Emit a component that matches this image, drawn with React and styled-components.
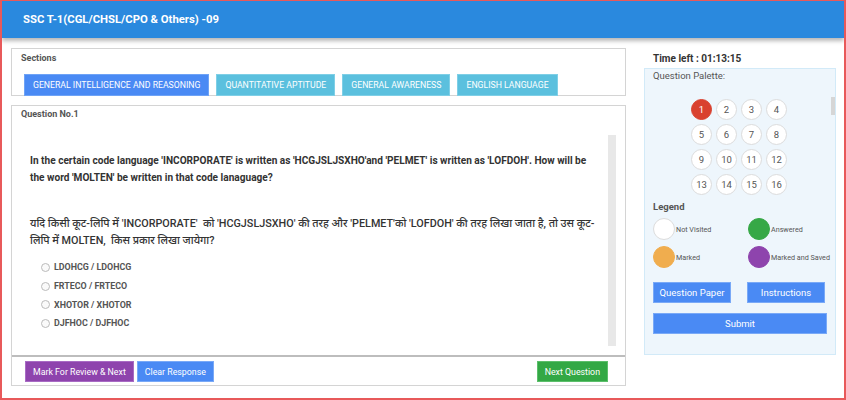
import React from "react";
import styled, { createGlobalStyle } from "styled-components";

const Global = createGlobalStyle`
  html, body { margin: 0; padding: 0; background: #fff; }
  body { font-family: Roboto, "Noto Sans", "Liberation Sans", sans-serif; }
  * { box-sizing: border-box; }
`;

const Frame = styled.div`
  width: 846px;
  height: 400px;
  border: 2px solid #e8595a;
  border-top-width: 1px;
  overflow: hidden;
  display: flex;
  flex-direction: column;
`;

const Header = styled.header`
  height: 37px;
  flex: none;
  background: #2a89de;
  box-shadow: 0 3px 4px rgba(0, 0, 0, 0.28);
  display: flex;
  align-items: center;
  padding-left: 21px;
  color: #fff;
  font-weight: 700;
  font-size: 11.3px;
  position: relative;
  z-index: 1;
`;

const Body = styled.div`
  display: flex;
  padding: 10px 0 0 9px;
  gap: 18px;
`;

const LeftCol = styled.div`
  width: 615px;
  display: flex;
  flex-direction: column;
  gap: 9px;
`;

const Panel = styled.div`
  border: 1px solid #d4d4d4;
  background: #fff;
`;

const SectionsPanel = styled(Panel)`
  height: 48px;
  padding: 3px 0 0 9px;
`;

const Label = styled.div`
  font-size: 9px;
  font-weight: 700;
  color: #555;
  line-height: 12px;
`;

const SectionRow = styled.div`
  display: flex;
  gap: 7px;
  margin-top: 10px;
  padding-left: 3px;
`;

const SectionBtn = styled.div`
  height: 22px;
  padding: 0 8px;
  display: flex;
  align-items: center;
  font-size: 8.7px;
  color: #fff;
  background: ${(p) => (p.$active ? "#4a8af4" : "#5bc0de")};
  border: 1px solid ${(p) => (p.$active ? "#6fa3f6" : "#7fcfe6")};
`;

const QuestionPanel = styled(Panel)`
  height: 281px;
  display: flex;
  flex-direction: column;
`;

const QHead = styled(Label)`
  padding: 2px 0 0 9px;
`;

const QScrollWrap = styled.div`
  display: flex;
  margin-top: 15px;
  height: 211px;
`;

const QContent = styled.div`
  flex: 1;
  padding: 17px 0 0 18px;
  color: #333;
`;

const EnglishQ = styled.p`
  margin: 0;
  font-size: 10.1px;
  font-weight: 700;
  line-height: 17px;
  width: 565px;
`;

const HindiQ = styled.p`
  margin: 29px 0 0;
  font-size: 10.8px;
  font-weight: 500;
  line-height: 17px;
  width: 577px;
`;

const Options = styled.div`
  margin-top: 9px;
  padding-left: 11px;
  display: flex;
  flex-direction: column;
`;

const Option = styled.label`
  display: flex;
  align-items: center;
  gap: 4px;
  height: 18.7px;
  font-size: 8.9px;
  font-weight: 700;
  color: #555;
`;

const Radio = styled.span`
  width: 9px;
  height: 9px;
  border-radius: 50%;
  border: 1px solid #bbb;
  background: #fafafa;
`;

const ScrollTrack = styled.div`
  width: 8px;
  margin-right: 9px;
  background: #e8e8e8;
`;

const Divider = styled.div`
  margin-top: 9px;
  height: 2px;
  background: #bdbdbd;
`;

const ActionRow = styled.div`
  display: flex;
  align-items: center;
  gap: 3px;
  padding: 4px 17px 0 13px;
`;

const ActionBtn = styled.div`
  height: 21px;
  padding: 0 7px;
  display: flex;
  align-items: center;
  font-size: 8.8px;
  color: #fff;
  background: ${(p) => p.$bg};
  border: 1px solid ${(p) => p.$bd};
  margin-left: ${(p) => (p.$push ? "auto" : "0")};
`;

const RightCol = styled.div`
  width: 192px;
  display: flex;
  flex-direction: column;
`;

const TimeLeft = styled.div`
  font-size: 10px;
  font-weight: 700;
  color: #333;
  padding-left: 9px;
  line-height: 18px;
  margin-top: 2px;
`;

const Palette = styled.div`
  height: 287px;
  background: #eef6fc;
  border: 1px solid #d2eaf8;
  padding: 1px 9px 0 8px;
  display: flex;
  flex-direction: column;
`;

const PaletteTitle = styled.div`
  font-size: 9.5px;
  color: #555;
  line-height: 12px;
`;

const GridWrap = styled.div`
  display: flex;
  align-items: flex-start;
  margin-top: 10px;
  height: 103px;
`;

const Grid = styled.div`
  flex: 1;
  display: grid;
  grid-template-columns: repeat(4, 21px);
  grid-auto-rows: 21px;
  gap: 4px;
  justify-content: start;
  padding: 7px 0 0 38px;
`;

const Num = styled.div`
  border-radius: 50%;
  display: flex;
  align-items: center;
  justify-content: center;
  font-size: 9.5px;
  color: ${(p) => (p.$current ? "#fff" : "#555")};
  background: ${(p) => (p.$current ? "#d9412f" : "#fff")};
  border: 1px solid ${(p) => (p.$current ? "#d9412f" : "#dcdcdc")};
`;

const MiniScroll = styled.div`
  width: 4px;
  height: 18px;
  background: #d6d6d6;
  margin: 5px -9px 0 0;
`;

const LegendTitle = styled(Label)`
  margin-top: 6px;
  font-size: 9.5px;
`;

const LegendGrid = styled.div`
  display: grid;
  grid-template-columns: 95px 1fr;
  row-gap: 6px;
  margin-top: 5px;
`;

const LegendItem = styled.div`
  display: flex;
  align-items: center;
  gap: 1px;
  font-size: 7.2px;
  color: #555;
  white-space: nowrap;
`;

const Dot = styled.span`
  width: 22px;
  height: 22px;
  border-radius: 50%;
  background: ${(p) => p.$c};
  border: 1px solid ${(p) => p.$b || p.$c};
  flex: none;
`;

const BtnRow = styled.div`
  display: flex;
  justify-content: space-between;
  margin-top: 14px;
  padding-right: 1px;
`;

const BlueBtn = styled.div`
  height: 21px;
  width: 78px;
  display: flex;
  align-items: center;
  justify-content: center;
  font-size: 9.5px;
  color: #fff;
  background: #4a8af4;
  border: 1px solid #79a9f7;
`;

const SubmitBtn = styled(BlueBtn)`
  width: 174px;
  margin-top: 10px;
`;

const sections = [
  "GENERAL INTELLIGENCE AND REASONING",
  "QUANTITATIVE APTITUDE",
  "GENERAL AWARENESS",
  "ENGLISH LANGUAGE",
];

const options = [
  "LDOHCG / LDOHCG",
  "FRTECO / FRTECO",
  "XHOTOR / XHOTOR",
  "DJFHOC / DJFHOC",
];

export default function App() {
  return (
    <>
      <Global />
      <Frame>
        <Header>SSC T-1(CGL/CHSL/CPO &amp; Others) -09</Header>
        <Body>
          <LeftCol>
            <SectionsPanel>
              <Label>Sections</Label>
              <SectionRow>
                {sections.map((s, i) => (
                  <SectionBtn key={s} $active={i === 0}>
                    {s}
                  </SectionBtn>
                ))}
              </SectionRow>
            </SectionsPanel>
            <QuestionPanel>
              <QHead>Question No.1</QHead>
              <QScrollWrap>
                <QContent>
                  <EnglishQ>
                    In the certain code language 'INCORPORATE' is written as
                    'HCGJSLJSXHO'and 'PELMET' is written as 'LOFDOH'. How will be
                    the word 'MOLTEN' be written in that code lanaguage?
                  </EnglishQ>
                  <HindiQ>
                    यदि किसी कूट-लिपि में 'INCORPORATE'&nbsp; को 'HCGJSLJSXHO' की
                    तरह और 'PELMET'को 'LOFDOH' की तरह लिखा जाता है, तो उस कूट-लिपि
                    में MOLTEN,&nbsp; किस प्रकार लिखा जायेगा?
                  </HindiQ>
                  <Options>
                    {options.map((o) => (
                      <Option key={o}>
                        <Radio />
                        {o}
                      </Option>
                    ))}
                  </Options>
                </QContent>
                <ScrollTrack />
              </QScrollWrap>
              <Divider />
              <ActionRow>
                <ActionBtn $bg="#8e44ad" $bd="#a86bc4">
                  Mark For Review &amp; Next
                </ActionBtn>
                <ActionBtn $bg="#4a8af4" $bd="#79a9f7">
                  Clear Response
                </ActionBtn>
                <ActionBtn $push $bg="#33a845" $bd="#5cbf6b">
                  Next Question
                </ActionBtn>
              </ActionRow>
            </QuestionPanel>
          </LeftCol>
          <RightCol>
            <TimeLeft>Time left : 01:13:15</TimeLeft>
            <Palette>
              <PaletteTitle>Question Palette:</PaletteTitle>
              <GridWrap>
                <Grid>
                  {Array.from({ length: 16 }, (_, i) => (
                    <Num key={i} $current={i === 0}>
                      {i + 1}
                    </Num>
                  ))}
                </Grid>
                <MiniScroll />
              </GridWrap>
              <LegendTitle>Legend</LegendTitle>
              <LegendGrid>
                <LegendItem>
                  <Dot $c="#fff" $b="#dcdcdc" />
                  Not Visited
                </LegendItem>
                <LegendItem>
                  <Dot $c="#36a846" />
                  Answered
                </LegendItem>
                <LegendItem>
                  <Dot $c="#f0ad4e" />
                  Marked
                </LegendItem>
                <LegendItem>
                  <Dot $c="#8e44ad" />
                  Marked and Saved
                </LegendItem>
              </LegendGrid>
              <BtnRow>
                <BlueBtn>Question Paper</BlueBtn>
                <BlueBtn>Instructions</BlueBtn>
              </BtnRow>
              <SubmitBtn>Submit</SubmitBtn>
            </Palette>
          </RightCol>
        </Body>
      </Frame>
    </>
  );
}
